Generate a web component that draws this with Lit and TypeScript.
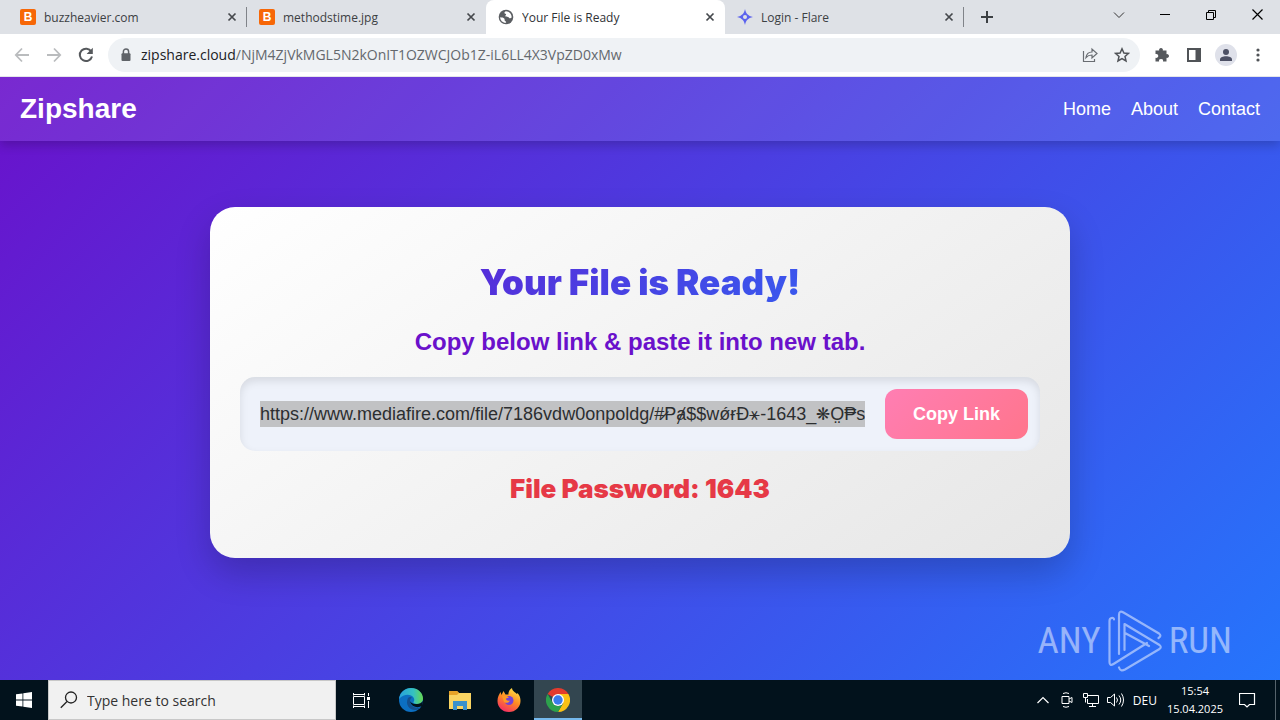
import { LitElement, html, css } from "lit";
import { customElement } from "lit/decorators.js";

interface Tab {
  title: string;
  icon: string;
  active?: boolean;
}

const TABS: Tab[] = [
  { title: "buzzheavier.com", icon: "b" },
  { title: "methodstime.jpg", icon: "b" },
  { title: "Your File is Ready", icon: "globe", active: true },
  { title: "Login - Flare", icon: "flare" },
];

const FILE_LINK =
  "https://www.mediafire.com/file/7186vdw0onpoldg/#\u0337P\u2c65$$w\u01ff\u024d\u00d0\u26b9-1643_\u2055O\u0324\u20b1ss";

const closeIcon = html`<svg width="10" height="10" viewBox="0 0 10 10"><path d="M1.5 1.5l7 7M8.5 1.5l-7 7" stroke="#45484c" stroke-width="1.7" fill="none"/></svg>`;

const favicon = (kind: string) => {
  if (kind === "b") return html`<span class="fav-b">B</span>`;
  if (kind === "globe")
    return html`<svg width="16" height="16" viewBox="0 0 16 16"><circle cx="8" cy="8" r="7.3" fill="#5b5e62"/><path d="M2.2 8.2c2 .2 3.200.3 4 1.200.8.9 0 1.700.7 2.400.5.5 1.300.7 1.200 1.900C4.800 14 2.200 11.500 2.200 8.200zM8 2.300c-1.300.6-1.800 1.200-1.500 2 .3.700 1.500.3 1.600 1.200.1.800-1 .8-.8 1.600.2.900 1.700.5 2.700.8 1 .3 1 1.300 2.100 1.300.8 0 1.300-.4 1.600-1C13.600 4.800 11 2.400 8 2.300z" fill="#fff"/></svg>`;
  return html`<svg width="16" height="16" viewBox="0 0 16 16"><path d="M8 0c.9 4.300 2.900 6.900 8 8-5.100 1.100-7.100 3.700-8 8-.9-4.300-2.900-6.900-8-8 5.100-1.100 7.100-3.700 8-8z" fill="#5b62ee"/><circle cx="8" cy="8" r="2" fill="#dee1e6"/></svg>`;
};

@customElement("browser-chrome")
export class BrowserChrome extends LitElement {
  static styles = css`
    :host { display: block; font-family: "Open Sans", sans-serif; color: #3c4043; }
    button { border: 0; background: none; padding: 0; margin: 0; font: inherit; color: inherit; display: grid; place-items: center; }
    svg { display: block; }
    .tabs { display: flex; height: 34px; background: #dee1e6; padding-left: 8px; }
    .tab { position: relative; display: flex; align-items: center; flex: 0 1 239px; min-width: 0; gap: 8px; padding: 0 10px 0 12px; box-sizing: border-box; }
    .tab.line::after { content: ""; position: absolute; right: 0; top: 7px; width: 1px; height: 20px; background: #808389; }
    .tab.active { background: #fff; border-radius: 8px 8px 0 0; color: #303236; }
    .title { flex: 1; white-space: nowrap; overflow: hidden; font-size: 12px; }
    .fav-b { width: 16px; height: 16px; border-radius: 2px; background: #f76707; color: #fff; font: bold 12px/16px "Liberation Sans", sans-serif; text-align: center; }
    .new { width: 46px; }
    .window { margin-left: auto; display: flex; }
    .window button { width: 46px; height: 29px; }
    .bar { display: flex; align-items: center; height: 43px; background: #fff; box-sizing: border-box; border-bottom: 1px solid #e4e6ea; padding: 0 6px; }
    .bar button { width: 32px; height: 32px; }
    .omni { flex: 1; min-width: 0; display: flex; align-items: center; height: 34px; border-radius: 17px; background: #eff2f5; margin: 0 6px; padding: 0 2px 0 10px; }
    .url { flex: 1; font-size: 14px; line-height: 20px; margin-left: 7px; color: #64686d; white-space: nowrap; overflow: hidden; }
    .url b { font-weight: 400; color: #202124; }
    .avatar { width: 22px; height: 22px; border-radius: 50%; background: #dfe1ea; display: grid; place-items: center; }
  `;

  render() {
    return html`
      <div class="tabs">
        ${TABS.map(
          (t, i) => html`<div class="tab ${t.active ? "active" : ""} ${i === 0 || i === 3 ? "line" : ""}">
            ${favicon(t.icon)}<span class="title">${t.title}</span>
            <button aria-label="Close tab">${closeIcon}</button>
          </div>`
        )}
        <button class="new" aria-label="New tab"><svg width="12" height="12" viewBox="0 0 12 12"><path d="M6 0v12M0 6h12" stroke="#3c4043" stroke-width="2"/></svg></button>
        <div class="window">
          <button aria-label="Search tabs"><svg width="12" height="12" viewBox="0 0 12 12"><path d="M1 3.500l5 5 5-5" stroke="#333" fill="none"/></svg></button>
          <button aria-label="Minimize"><svg width="10" height="10" viewBox="0 0 10 10"><path d="M0 4.500h10" stroke="#000"/></svg></button>
          <button aria-label="Restore"><svg width="10" height="10" viewBox="0 0 10 10"><path d="M.5 2.500h7v7h-7zM2.500 2.500v-2h7v7h-2" stroke="#000" fill="none"/></svg></button>
          <button aria-label="Close"><svg width="11" height="11" viewBox="0 0 11 11"><path d="M.5.5l10 10M10.500.5l-10 10" stroke="#000" stroke-width="1.200" fill="none"/></svg></button>
        </div>
      </div>
      <div class="bar">
        <button aria-label="Back"><svg width="16" height="16" viewBox="0 0 16 16"><path d="M15 8H2M8 1.500L1.800 8 8 14.500" stroke="#babcbe" stroke-width="1.800" fill="none"/></svg></button>
        <button aria-label="Forward"><svg width="16" height="16" viewBox="0 0 16 16"><path d="M1 8h13M8 1.500L14.200 8 8 14.500" stroke="#babcbe" stroke-width="1.800" fill="none"/></svg></button>
        <button aria-label="Reload"><svg width="16" height="16" viewBox="0 0 16 16"><path d="M13.300 4.600A6.200 6.200 0 1 0 14 9.500" stroke="#55585c" stroke-width="2" fill="none"/><path d="M14.800.8v6.200H8.600z" fill="#55585c"/></svg></button>
        <div class="omni">
          <svg width="16" height="16" viewBox="0 0 16 16"><path d="M5.400 7V4.600a2.600 2.600 0 0 1 5.200 0V7" stroke="#5f6368" stroke-width="1.500" fill="none"/><rect x="3.500" y="6.200" width="9" height="7.800" rx="1" fill="#5f6368"/></svg>
          <span class="url"><b>zipshare.cloud</b>/NjM4ZjVkMGL5N2kOnIT1OZWCJOb1Z-iL6LL4X3VpZD0xMw</span>
          <button aria-label="Share"><svg width="16" height="16" viewBox="0 0 16 16"><path d="M1.500 4v10.500h11V12M4 10.500c.5-3.500 2.500-5.500 6-5.500V2l5 4.500-5 4.500V8c-3 0-4.500.7-6 2.500z" stroke="#696d72" stroke-width="1.200" fill="none"/></svg></button>
          <button aria-label="Bookmark"><svg width="16" height="16" viewBox="0 0 16 16"><path d="M8 1.800l1.900 4.200 4.500.4-3.400 3 1 4.500L8 11.500l-4 2.400 1-4.500-3.400-3 4.500-.4z" stroke="#505357" stroke-width="1.500" fill="none"/></svg></button>
        </div>
        <button aria-label="Extensions"><svg width="16" height="16" viewBox="0 0 16 16"><path d="M1.500 3.500h3.700a1.900 1.900 0 1 1 3.600 0h3.700v3.700a1.900 1.900 0 1 1 0 3.600v3.700H9a2 2 0 1 0-3.900 0H1.500V10.800a2 2 0 1 0 0-3.700z" fill="#55585c"/></svg></button>
        <button aria-label="Side panel"><svg width="14" height="14" viewBox="0 0 14 14"><path d="M1 1h12v12H1z" stroke="#505357" stroke-width="2" fill="none"/><path d="M8.500 1H13v12H8.500z" fill="#505357"/></svg></button>
        <button aria-label="Profile"><span class="avatar"><svg width="14" height="14" viewBox="0 0 14 14"><circle cx="7" cy="4" r="3" fill="#4c5064"/><path d="M1 13v-1.500C1 9 4 8.200 7 8.200s6 .8 6 3.300V13z" fill="#4c5064"/></svg></span></button>
        <button aria-label="Menu"><svg width="4" height="14" viewBox="0 0 4 14"><g fill="#505357"><circle cx="2" cy="2" r="1.600"/><circle cx="2" cy="7" r="1.600"/><circle cx="2" cy="12" r="1.600"/></g></svg></button>
      </div>
    `;
  }
}

@customElement("share-page")
export class SharePage extends LitElement {
  static styles = css`
    :host { display: flex; flex-direction: column; position: relative; overflow: hidden; background: linear-gradient(135deg, #6a11cb, #2575fc); font-family: "Liberation Sans", Arial, sans-serif; }
    header { display: flex; align-items: center; justify-content: space-between; height: 64px; padding: 0 20px; background: rgba(255, 255, 255, 0.1); box-shadow: 0 4px 10px rgba(0, 0, 0, 0.2); color: #fff; }
    .logo { font-size: 28px; font-weight: 700; }
    nav { display: flex; gap: 20px; }
    nav a { color: #fff; text-decoration: none; font-size: 18px; }
    main { flex: 1; display: grid; justify-items: center; align-items: start; padding: 66px 20px; }
    .card { width: 100%; max-width: 860px; box-sizing: border-box; padding: 55px 30px 53px; background: linear-gradient(145deg, #ffffff, #e6e6e6); border-radius: 25px; box-shadow: 0 15px 35px rgba(0, 0, 0, 0.2); text-align: center; }
    h1 { margin: 0 0 25px; font: 900 35px/40px Inter, sans-serif; background: linear-gradient(135deg, #6a11cb, #2575fc); background-clip: text; -webkit-background-clip: text; color: transparent; }
    .hint { margin: 0 0 20px; font-size: 24px; line-height: 30px; font-weight: 700; color: #6a11cb; }
    .box { display: flex; align-items: center; gap: 20px; padding: 12px 12px 12px 20px; background: #eef2fa; border-radius: 15px; box-shadow: inset 0 4px 8px rgba(0, 0, 0, 0.1); }
    .box input { flex: 1; min-width: 0; border: 0; padding: 0; height: 26px; background: #c1c2c4; font: 18px "Liberation Sans", Arial, sans-serif; color: #2c2e30; outline: none; }
    .box button { border: 0; height: 50px; padding: 0 28px; border-radius: 12px; background: linear-gradient(135deg, #ff7eb3, #ff758c); color: #fff; font: bold 18px "Liberation Sans", Arial, sans-serif; }
    .password { margin: 22px 0 0; font: 900 26px/32px Inter, sans-serif; color: #e63946; }
    .mark { position: absolute; right: 48px; bottom: 8px; display: flex; align-items: center; gap: 7px; color: rgba(255, 255, 255, 0.5); font: 37px/62px "Roboto Condensed", "Liberation Sans Narrow", sans-serif; }
  `;

  render() {
    return html`
      <header>
        <div class="logo">Zipshare</div>
        <nav><a href="#home">Home</a><a href="#about">About</a><a href="#contact">Contact</a></nav>
      </header>
      <main>
        <section class="card">
          <h1>Your File is Ready!</h1>
          <p class="hint">Copy below link &amp; paste it into new tab.</p>
          <div class="box">
            <input aria-label="File link" readonly .value=${FILE_LINK} />
            <button>Copy Link</button>
          </div>
          <p class="password">File Password: 1643</p>
        </section>
      </main>
      <div class="mark"><span>ANY</span><svg width="54" height="62" viewBox="0 0 54 62" fill="none" stroke="#fff" stroke-opacity=".5" stroke-width="2.200" stroke-linejoin="round" stroke-linecap="round"><path d="M6 9.500Q6 7.500 3.500 8Q1.500 8.500 1.500 11V52Q1.500 56.500 5.500 54L39 33M11 44V5Q11 0 15.500 2.500L51 23.500Q54 26 50.500 28M16.500 40V14L51.500 35Q54 37 51.500 39L17 59.500Q12.500 62 11 57.500M17 23L41 36"/></svg><span>RUN</span></div>
    `;
  }
}

@customElement("task-bar")
export class TaskBar extends LitElement {
  static styles = css`
    :host { display: flex; height: 40px; background: #02121c; color: #fff; font-family: "Open Sans", sans-serif; }
    button { border: 0; background: none; padding: 0; display: grid; place-items: center; width: 48px; }
    .search { display: flex; align-items: center; gap: 9px; flex: 0 1 288px; min-width: 0; box-sizing: border-box; padding: 0 11px; background: #f1f1f1; border: 1px solid #c8c8c8; }
    .search input { flex: 1; min-width: 0; border: 0; padding: 0; background: none; font: 14px "Open Sans", sans-serif; outline: none; }
    .search input::placeholder { color: #333; opacity: 1; }
    .apps { display: flex; gap: 1px; }
    .apps .view { width: 50px; }
    .apps .running { background: #334650; box-shadow: inset 0 -2px #76b9ed; }
    .tray { margin-left: auto; display: flex; align-items: center; gap: 8px; font-size: 12px; }
    .tray button { width: 16px; height: 40px; }
    .lang { margin: 0 2px; }
    .clock { text-align: center; line-height: 18px; font-size: 11px; }
    .tray .notes { width: 32px; }
    .tray .desktop { width: 5px; margin-left: 4px; border-left: 1px solid #56636b; }
  `;

  render() {
    return html`
      <button aria-label="Start"><svg width="16" height="16" viewBox="0 0 16 16"><path d="M0 2.300l6.500-.9v6.200H0zM7.300 1.300L16 0v7.600H7.300zM0 8.400h6.500v6.200L0 13.700zM7.300 8.400H16V16l-8.700-1.200z" fill="#fff"/></svg></button>
      <label class="search"><svg width="18" height="18" viewBox="0 0 18 18"><circle cx="11" cy="6.500" r="5.500" stroke="#222" stroke-width="1.300" fill="none"/><path d="M7 10.500L.8 16.800" stroke="#222" stroke-width="1.300"/></svg><input aria-label="Search" placeholder="Type here to search" /></label>
      <div class="apps">
        <button class="view" aria-label="Task view"><svg width="17" height="17" viewBox="0 0 17 17"><path d="M.5 4.500h11v8H.5zM.5 1v2.500M11.500 1v2.500M.5 16v-2.500M11.500 16v-2.500M.5 2.500h11M.5 14.500h11M15.500 1v3M15.500 9v7" stroke="#fff" fill="none"/><path d="M14 5h3v3h-3z" fill="#fff"/></svg></button>
        <button aria-label="Edge"><svg width="24" height="24" viewBox="0 0 24 24"><defs><linearGradient id="e1" x1="0" x2="1"><stop stop-color="#27a0dd"/><stop offset=".6" stop-color="#35c1c1"/><stop offset="1" stop-color="#67d84f"/></linearGradient></defs><circle cx="12" cy="12" r="12" fill="#0c6fc2"/><path d="M0 11C1 4 6 0 12 0c7 0 12 5 12 10.500 0 3.500-2.500 5.500-6 5.500-2.500 0-4-1-3.500-2 1-1.500 1-3 0-4.500C12 6 5 5.500 0 11z" fill="url(#e1)"/><path d="M9 10c-3 6 1 12 7 12 2.500 0 4.500-1 6-2.500-4 1.500-11-.5-11-6.500 0-2 1-3 2-3.500-1.500-1-3-.5-4 .5z" fill="#14508f"/><path d="M23 18c-4 2.500-11 1-12-5 .5 1.500 3 3.500 7 3 2.500 0 4.500-1 6-3z" fill="#02121c"/></svg></button>
        <button aria-label="File Explorer"><svg width="22" height="19" viewBox="0 0 22 19"><path d="M0 0h8l2 2h12v16H0z" fill="#f9d462"/><path d="M0 0h8l2 2-2 2H0z" fill="#e6a328"/><path d="M4 10h14v9h-4v-4H8v4H4z" fill="#3a91cb"/></svg></button>
        <button aria-label="Firefox"><svg width="24" height="24" viewBox="0 0 24 24"><defs><linearGradient id="f1" x1=".8" y1="0" x2=".3" y2="1"><stop stop-color="#ffe64a"/><stop offset=".5" stop-color="#ff8b22"/><stop offset="1" stop-color="#f52c65"/></linearGradient></defs><path d="M12 24C5 24 .5 19 .5 13c0-4 1.500-6.500 3-9l1 3 2-4 2 3.500h3C11 4 13 1 15 0c0 3 3.500 4.500 5 6l.5-1C23 8 23.500 10 23.500 13c0 6-5 11-11.500 11z" fill="url(#f1)"/><circle cx="12" cy="12.500" r="4.500" fill="#7542d6"/><path d="M5 8c3-1 5 0 7 1.500l-3 1c0 2 2 2.500 4 2-1 2.500-4 3-6 1.500z" fill="#ff9a25"/></svg></button>
        <button class="running" aria-label="Chrome"><svg width="24" height="24" viewBox="0 0 24 24"><path d="M12 12L1.600 6A12 12 0 0 1 22.400 6z" fill="#e33b2e"/><path d="M12 6h10.400A12 12 0 0 1 12 24l5.200-9z" fill="#fbc116"/><path d="M1.600 6l5.200 9a6 6 0 0 0 10.400 0L12 24A12 12 0 0 1 1.600 6z" fill="#2da14c"/><circle cx="12" cy="12" r="6" fill="#fff"/><circle cx="12" cy="12" r="4.700" fill="#3a7cec"/></svg></button>
      </div>
      <div class="tray">
        <button aria-label="Hidden icons"><svg width="12" height="8" viewBox="0 0 12 8"><path d="M.5 7L6 1.500 11.500 7" stroke="#fff" stroke-width="1.200" fill="none"/></svg></button>
        <button aria-label="Meet now"><svg width="12" height="16" viewBox="0 0 12 16"><path d="M1 4.500h7v7H1zM8 7l3-1.500v5L8 9M2 1.500q3-1.500 6 0M2 14.500q3 1.500 6 0" stroke="#fff" fill="none"/></svg></button>
        <button aria-label="Network"><svg width="16" height="14" viewBox="0 0 16 14"><path d="M5 2.500h10.500v8h-11V6M9.500 10.500v3M6 13.500h7M.5.500h4v4h-4zM2.500 4.500v5" stroke="#fff" fill="none"/></svg></button>
        <button aria-label="Volume"><svg width="17" height="14" viewBox="0 0 17 14"><path d="M.5 4.500h3l4-3.500v12l-4-3.500h-3zM9.500 4.500q2 2.500 0 5M12 2.500q3.500 4.500 0 9M14.500.5q4 6.500 0 13" stroke="#fff" fill="none"/></svg></button>
        <span class="lang">DEU</span>
        <div class="clock">15:54<br />15.04.2025</div>
        <button class="notes" aria-label="Notifications"><svg width="17" height="17" viewBox="0 0 17 17"><path d="M.5 1.500h15v11h-5L8 15l-2.500-2.500h-5z" stroke="#fff" stroke-width="1.200" fill="none"/></svg></button>
        <button class="desktop" aria-label="Show desktop"></button>
      </div>
    `;
  }
}

@customElement("app-root")
export class AppRoot extends LitElement {
  static styles = css`
    :host { display: flex; flex-direction: column; min-height: 100vh; }
    share-page { flex: 1; }
  `;
  render() {
    return html`<browser-chrome></browser-chrome><share-page></share-page><task-bar></task-bar>`;
  }
}
